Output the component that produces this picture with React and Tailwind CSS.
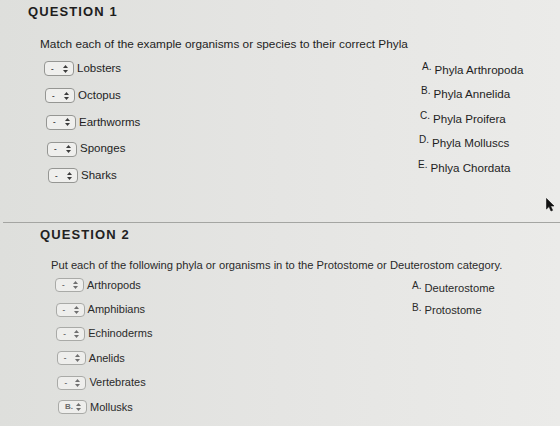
import React from 'react';

const q1Items = ['Lobsters', 'Octopus', 'Earthworms', 'Sponges', 'Sharks'];
const q1Options = [
  ['A.', 'Phyla Arthropoda'],
  ['B.', 'Phyla Annelida'],
  ['C.', 'Phyla Proifera'],
  ['D.', 'Phyla Molluscs'],
  ['E.', 'Phlya Chordata'],
];
const q2Items = [
  ['-', 'Arthropods'],
  ['-', 'Amphibians'],
  ['-', 'Echinoderms'],
  ['-', 'Anelids'],
  ['-', 'Vertebrates'],
  ['B.', 'Mollusks'],
];
const q2Options = [
  ['A.', 'Deuterostome'],
  ['B.', 'Protostome'],
];

const Arrows = ({ color }) => (
  <svg width="5" height="8" viewBox="0 0 5 8" className="shrink-0">
    <path d="M2.5 0 L5 3 L0 3 Z" fill={color} />
    <path d="M2.5 8 L5 5 L0 5 Z" fill={color} />
  </svg>
);

const Select = ({ value = '-', faded }) => (
  <div
    className={
      'flex items-center justify-between shrink-0 rounded-[4px] border pl-[6px] pr-[5px] ' +
      (faded
        ? 'w-[29px] h-[14px] border-[#a9aaa7] bg-[#eeeeec] text-[#6a6a6a]'
        : 'w-[30px] h-[15px] border-[#959693] bg-[#efefed] text-[#444]')
    }
  >
    <span className="text-[8px] leading-none font-bold">{value}</span>
    <Arrows color={faded ? '#6f6f6f' : '#3c3c3c'} />
  </div>
);

const Cursor = () => (
  <svg width="9" height="14" viewBox="0 0 9 14" className="absolute left-[546px] top-[198px]">
    <path d="M0.5 0.5 L0.5 11 L3 8.6 L5 13 L6.6 12.3 L4.6 8 L8 8 Z" fill="#111" stroke="#111" strokeWidth="0.6" />
  </svg>
);

export default function App() {
  return (
    <div
      className="relative w-[560px] h-[426px] overflow-hidden bg-gradient-to-r from-[#dedfdc] via-[#e5e5e3] to-[#ebebe9] text-[#1e1e1e]"
      style={{ fontFamily: '"Liberation Sans", Arial, sans-serif' }}
    >
      {/* question 1 */}
      <div className="h-[222px] pl-[28px] pt-[4px]">
        <div className="h-[15px] leading-[15px] text-[13px] font-bold tracking-[1.1px] text-[#1d1d1d]">QUESTION 1</div>
        <div className="mt-[18px] ml-[12px] h-[14px] leading-[14px] text-[11.8px]">
          Match each of the example organisms or species to their correct Phyla
        </div>
        <div className="mt-[4.5px] ml-[16px] flex">
          <div className="w-[376px] flex flex-col">
            {q1Items.map((label, i) => (
              <div key={label} className="h-[26.75px] flex items-center" style={{ paddingLeft: i }}>
                <Select />
                <span className="ml-[3px] text-[11.5px] leading-none">{label}</span>
              </div>
            ))}
          </div>
          <div className="mt-[2px] flex flex-col">
            {q1Options.map(([letter, text], i) => (
              <div key={letter} className="h-[24.5px] flex items-center" style={{ marginLeft: 2 - i }}>
                <span className="text-[10px] leading-none -mt-[6px]">{letter}</span>
                <span className="ml-[3px] text-[11.6px] leading-none">{text}</span>
              </div>
            ))}
          </div>
        </div>
      </div>

      <div className="ml-[3px] h-px bg-[#a4a5a2]" />

      {/* question 2 */}
      <div className="pl-[40px] pt-[3.5px] text-[#2a2a2a]">
        <div className="h-[15px] leading-[15px] text-[13px] font-bold tracking-[1.1px] text-[#222]">QUESTION 2</div>
        <div className="mt-[16.5px] ml-[11px] h-[14px] leading-[14px] text-[11.2px]">
          Put each of the following phyla or organisms in to the Protostome or Deuterostom category.
        </div>
        <div className="mt-[1px] ml-[15px] flex">
          <div className="w-[357px] flex flex-col">
            {q2Items.map(([value, label], i) => (
              <div key={label} className="h-[24.4px] flex items-center" style={{ paddingLeft: i * 0.6 }}>
                <Select value={value} faded />
                <span className="ml-[3px] text-[11px] leading-none">{label}</span>
              </div>
            ))}
          </div>
          <div className="mt-[5px] flex flex-col">
            {q2Options.map(([letter, text]) => (
              <div key={letter} className="h-[22px] flex items-center">
                <span className="text-[10px] leading-none -mt-[6px]">{letter}</span>
                <span className="ml-[3px] text-[11.2px] leading-none">{text}</span>
              </div>
            ))}
          </div>
        </div>
      </div>

      <Cursor />
    </div>
  );
}
